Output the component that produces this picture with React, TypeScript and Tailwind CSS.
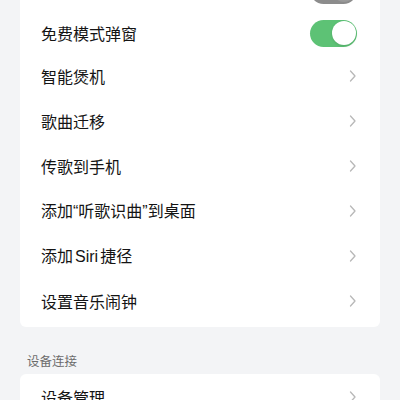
const font = { fontFamily: '"Noto Sans CJK SC", "Noto Sans", sans-serif' };
const latin = { fontFamily: '"Liberation Sans", Arial, sans-serif' };

function Chevron() {
  return (
    <svg width="8" height="14" viewBox="0 0 8 14" className="mr-[1px]">
      <path d="M1.5 2 L6 7 L1.5 12" fill="none" stroke="#b8b8b8" strokeWidth="1.3" strokeLinecap="round" strokeLinejoin="round" />
    </svg>
  );
}

function Toggle({ on, muted }: { on: boolean; muted?: boolean }) {
  return (
    <div
      className={
        'w-[47px] h-[27px] rounded-full p-[1.5px] flex ' +
        (muted ? 'bg-[#8c8c8c] justify-end' : on ? 'bg-[#5dc275] justify-end' : 'bg-[#e5e5ea] justify-start')
      }
    >
      <div className={'w-[24px] h-[24px] rounded-full ' + (muted ? 'bg-[#9a9a9a]' : 'bg-white shadow-sm')} />
    </div>
  );
}

const links: { key: string; label: React.ReactNode }[] = [
  { key: 'boost', label: '智能煲机' },
  { key: 'move', label: '歌曲迁移' },
  { key: 'phone', label: '传歌到手机' },
  {
    key: 'recog',
    label: (
      <>
        添加<span style={latin}>“</span>听歌识曲<span style={latin}>”</span>到桌面
      </>
    ),
  },
  {
    key: 'siri',
    label: (
      <>
        添加<span style={latin} className="mx-[2px]">Siri</span>捷径
      </>
    ),
  },
  { key: 'alarm', label: '设置音乐闹钟' },
];

export default function App() {
  return (
    <div className="w-[400px] h-[400px] overflow-hidden bg-[#f3f4f6] px-5" style={font}>
      <div className="bg-white rounded-md -mt-[33px] pb-[4px]">
        <div className="h-[46px] flex items-center justify-end pl-[21px] pr-[23px]">
          <Toggle on muted />
        </div>
        <div className="h-[40px] flex items-center justify-between pl-[21px] pr-[23px]">
          <span className="text-[16px] text-[#141414]">免费模式弹窗</span>
          <Toggle on />
        </div>
        {links.map((item) => (
          <div key={item.key} className="h-[45px] flex items-center justify-between pl-[21px] pr-[22px]">
            <span className="text-[16px] text-[#141414]">{item.label}</span>
            <Chevron />
          </div>
        ))}
      </div>
      <div className="pt-[25px] pl-[7px] text-[12.5px] text-[#6b6b6b] leading-[18px]">设备连接</div>
      <div className="bg-white rounded-md mt-[4px]">
        <div className="h-[45px] flex items-center justify-between pl-[21px] pr-[22px]">
          <span className="text-[16px] text-[#141414]">设备管理</span>
          <Chevron />
        </div>
      </div>
    </div>
  );
}
